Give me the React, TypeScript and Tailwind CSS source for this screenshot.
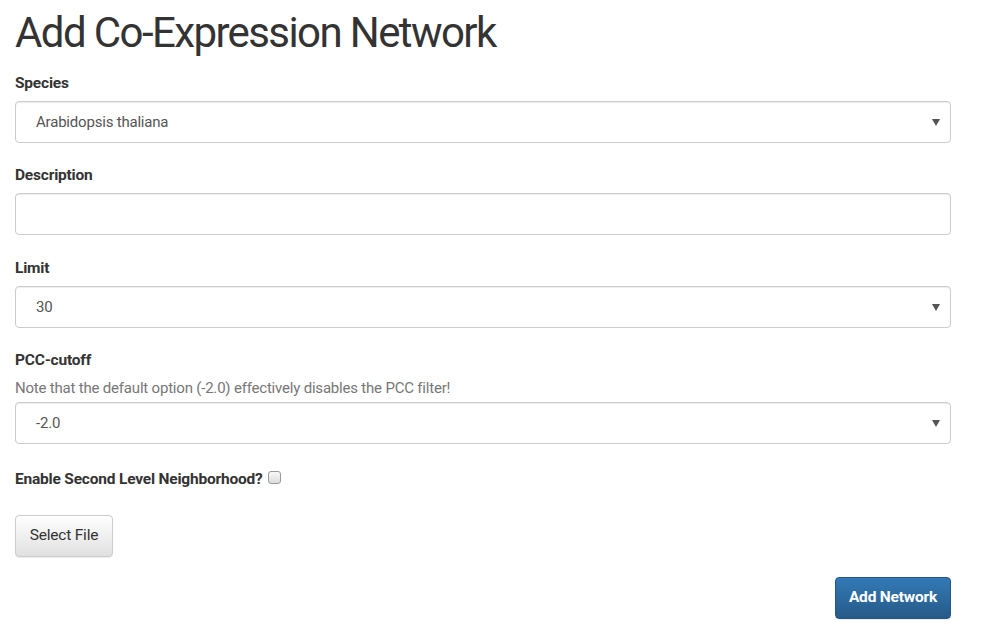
import React from "react"

const font = "font-['Roboto',sans-serif]"

function Caret() {
  return (
    <svg width="8" height="7" viewBox="0 0 8 7" className="shrink-0">
      <path d="M0 0 L8 0 L4 7 Z" fill="#555" />
    </svg>
  )
}

function SelectBox({ value }: { value: string }) {
  return (
    <div className="flex h-[42px] items-center justify-between rounded-[4px] border border-[#ccc] bg-white pl-5 pr-[10px] shadow-[inset_0_1px_1px_rgba(0,0,0,0.075)]">
      <span className="text-[15px] tracking-[-0.2px] text-[#555]">{value}</span>
      <Caret />
    </div>
  )
}

function Label({ children, className = "" }: { children: React.ReactNode; className?: string }) {
  return <div className={`text-[15.5px] font-bold leading-[22px] tracking-[-0.2px] text-[#333] ${className}`}>{children}</div>
}

export default function App() {
  return (
    <div className={`${font} min-h-[643px] bg-white pl-[15px] pr-[31px] text-[#333]`}>
      <h1 className="h-[72px] pt-[7px] text-[42px] leading-[52px] tracking-[-1.6px] text-[#333]">Add Co-Expression Network</h1>

      <Label className="mb-[7px]">Species</Label>
      <SelectBox value="Arabidopsis thaliana" />

      <Label className="mt-[21px] mb-[7px]">Description</Label>
      <div className="h-[42px] rounded-[4px] border border-[#ccc] bg-white shadow-[inset_0_1px_1px_rgba(0,0,0,0.075)]" />

      <Label className="mt-[22px] mb-[7px]">Limit</Label>
      <SelectBox value="30" />

      <Label className="mt-[21px]">PCC-cutoff</Label>
      <div className="mt-[7px] mb-[4px] text-[15px] leading-[20px] tracking-[-0.2px] text-[#777]">
        Note that the default option (-2.0) effectively disables the PCC filter!
      </div>
      <SelectBox value="-2.0" />

      <div className="mt-[24px] flex items-center">
        <Label>Enable Second Level Neighborhood?</Label>
        <span className="mb-[3px] ml-[5px] inline-block h-[13px] w-[13px] rounded-[3px] border border-[#999] bg-gradient-to-b from-[#f8f8f8] to-[#ddd]" />
      </div>

      <button className="mt-[25px] h-[42px] w-[98px] rounded-[4px] border border-[#ccc] bg-gradient-to-b from-white to-[#e0e0e0] text-[15.5px] tracking-[-0.2px] text-[#333] shadow-[0_1px_1px_rgba(0,0,0,0.075)]">
        Select File
      </button>

      <div className="mt-[20px] flex justify-end">
        <button className="h-[42px] w-[116px] rounded-[4px] border border-[#245580] bg-gradient-to-b from-[#337ab7] to-[#265a88] text-[15.5px] font-bold tracking-[-0.2px] text-white shadow-[0_1px_1px_rgba(0,0,0,0.075)]">
          Add Network
        </button>
      </div>
    </div>
  )
}
